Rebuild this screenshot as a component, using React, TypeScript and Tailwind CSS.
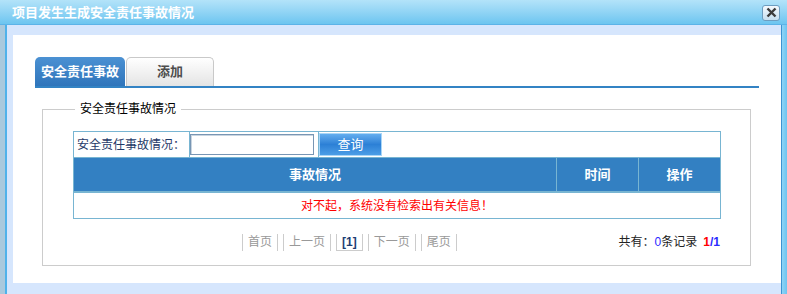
import React from 'react';

const pageLinks = ['首页', '上一页', '[1]', '下一页', '尾页'];

const App: React.FC = () => {
  return (
    <div className="flex h-[294px] w-[787px] flex-col overflow-hidden bg-white [font-family:'Liberation_Sans','Noto_Sans_CJK_SC',sans-serif]">
      {/* 标题栏 */}
      <div className="flex h-[25px] shrink-0 items-center justify-between border-b border-[#5cb3e8] bg-gradient-to-b from-[#b3e3f9] to-[#6cc5f0] pl-[12px] pr-[7px]">
        <span className="text-[13px] font-bold leading-none text-white">项目发生生成安全责任事故情况</span>
        <button className="mt-[1px] flex h-[16px] w-[18px] items-center justify-center rounded-[3px] border border-[#6d9dc0] bg-gradient-to-b from-[#f4f9fd] to-[#c6dff0]">
          <svg width="11" height="11" viewBox="0 0 11 11">
            <path d="M1.5 1.5L9.5 9.5M9.5 1.5L1.5 9.5" stroke="#3b3b3b" strokeWidth={2.4} />
          </svg>
        </button>
      </div>

      <div className="flex min-h-0 flex-1">
        <div className="w-[7px] shrink-0 border-r-2 border-[#4fb2ea] bg-[#a9c9dd]" />

        <div className="flex min-w-0 flex-1 flex-col bg-[#d6e6fd] pt-[10px] pl-[6px] pb-[11px]">
          <div className="flex-1 bg-white">
            {/* 标签页 */}
            <div className="px-[22px] pt-[22px]">
              <div className="flex border-b-2 border-[#3383c4]">
                <div className="flex h-[29px] w-[90px] items-center justify-center rounded-t-[5px] bg-gradient-to-b from-[#4b91d3] to-[#2f75bb] text-[13px] font-bold text-white">
                  安全责任事故
                </div>
                <div className="ml-[1px] flex h-[29px] w-[88px] items-center justify-center rounded-t-[5px] border border-b-0 border-[#c9c9c9] bg-gradient-to-b from-white to-[#e4e4e4] text-[13px] font-bold text-[#4d4d4d]">
                  添加
                </div>
              </div>
            </div>

            {/* 查询区 */}
            <fieldset className="mt-[13px] mr-[30px] ml-[29px] border border-[#cccccc] p-0">
              <legend className="ml-[32px] px-[5px] text-[12px] leading-[16px] text-black">安全责任事故情况</legend>
              <div className="pt-[14px] pr-[29px] pb-[15px] pl-[30px]">
                <div className="border border-[#78b5d2]">
                  <div className="flex h-[26px] border-b border-[#78b5d2]">
                    <div className="flex w-[116px] items-center border-r border-[#78b5d2] pl-[3px] text-[12px] text-[#1f3a68]">
                      安全责任事故情况：
                    </div>
                    <div className="flex w-[129px] items-center border-r border-[#78b5d2]">
                      <input className="h-[21px] w-[124px] border border-[#7896b4] shadow-[inset_1px_1px_0_#c9d5e0] outline-none" />
                    </div>
                    <div className="flex flex-1 items-center">
                      <button className="flex h-[23px] w-[63px] items-center justify-center border border-[#a9d6f7] bg-gradient-to-b from-[#62adef] via-[#2c80d6] to-[#4b9de6] text-[13px] text-white">
                        查询
                      </button>
                    </div>
                  </div>
                  <div className="flex h-[35px] border-b-2 border-[#78b5d2] bg-[#3380c2] text-[13px] font-bold text-white">
                    <div className="flex flex-1 items-center justify-center border-r border-[#78b5d2]">事故情况</div>
                    <div className="flex w-[82px] items-center justify-center border-r border-[#78b5d2]">时间</div>
                    <div className="flex w-[81px] items-center justify-center">操作</div>
                  </div>
                  <div className="flex h-[25px] items-center justify-center text-[12px] text-[#ff0000]">
                    对不起，系统没有检索出有关信息！
                  </div>
                </div>

                {/* 分页 */}
                <div className="mt-[15px] flex h-[16px] items-center text-[12px] leading-[16px]">
                  <div className="ml-[169px] flex gap-[5px]">
                    {pageLinks.map((p) =>
                      p === '[1]' ? (
                        <span key={p} className="border-x border-b border-[#cccccc] px-[5px] font-bold text-[#1e3e74]">
                          {p}
                        </span>
                      ) : (
                        <span key={p} className="border-x border-[#cccccc] px-[5px] text-[#999999]">
                          {p}
                        </span>
                      )
                    )}
                  </div>
                  <div className="mr-[1px] ml-auto text-[#222222]">
                    共有：<span className="text-[#2b2bff]">0</span>条记录
                    <span className="ml-[6px] font-bold text-[#ff0000]">1</span>
                    <span className="font-bold text-[#2b2bff]">/1</span>
                  </div>
                </div>
              </div>
            </fieldset>
          </div>
        </div>

        <div className="w-[6px] shrink-0 border-l border-[#3c93d2] bg-gradient-to-r from-[#8fd4f6] to-[#6cc4f0]" />
      </div>
    </div>
  );
};

export default App;
